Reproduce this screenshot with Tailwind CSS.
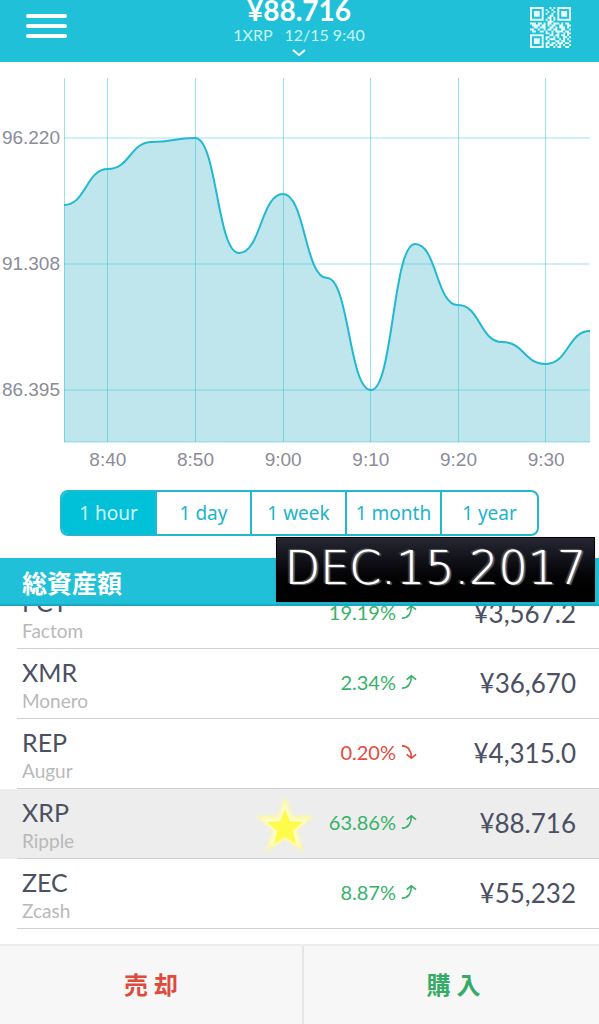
<!DOCTYPE html>
<html lang="ja">
<head>
    <meta charset="UTF-8">
    <meta name="viewport" content="width=device-width, initial-scale=1.0">
    <script src="https://cdn.jsdelivr.net/npm/@tailwindcss/browser@4"></script>
    <title>XRP chart</title>
</head>
<body class="flex min-h-screen flex-col bg-white font-[Lato,'Noto_Sans_CJK_JP',sans-serif] text-[#4b5163]">

    <!-- Header -->
    <header class="flex h-[62px] items-start justify-between overflow-hidden bg-[#20c1d8] pr-7 pl-[26px] text-white">
      <button class="mt-3 h-8 w-[42px]" aria-label="Menu">
        <svg viewBox="0 0 42 32" class="h-8 w-[42px]" fill="none" stroke="currentColor" stroke-width="4" stroke-linecap="round">
          <path d="M2 4H39M2 14H39M2 24H39" />
        </svg>
      </button>
      <div class="flex flex-col items-center">
        <h1 class="-mt-1 text-[28px] leading-7 font-bold">¥88.716</h1>
        <p class="text-base leading-[22px] whitespace-pre text-[#c9f4fa]">1XRP   12/15 9:40</p>
        <svg viewBox="0 0 14 8" class="mt-[3px] h-2 w-[14px]" fill="none" stroke="currentColor" stroke-width="2">
          <path d="M1 1l6 5 6-5" />
        </svg>
      </div>
      <button class="mt-[7px] h-[41px] w-[41px]" aria-label="QR">
        <svg viewBox="0 0 21 21" class="h-[41px] w-[41px]" fill="#e6fcff"><path id="qr" d="" /></svg>
      </button>
    </header>

    <!-- Chart -->
    <section class="flex pr-[9px] font-['Liberation_Sans',sans-serif] text-[19px] text-[#8b8c99]">
      <div class="w-16 shrink-0 pt-[13px] pr-1 text-right">
        <p class="h-[126px] leading-[126px]">96.220</p>
        <p class="h-[126px] leading-[126px]">91.308</p>
        <p class="h-[126px] leading-[126px]">86.395</p>
      </div>
      <div class="min-w-0 flex-1 pt-4">
        <svg viewBox="0 0 526 364" preserveAspectRatio="none" class="block h-[364px] w-full overflow-visible">
          <path fill="#bfe6ed" d="M0 127C22 127 22 91 44 91C66 91 66 64 88 64C110 64 109 60 131 60C153 60 153 175 175 175C197 175 197 116 219 116C241 116 241 200 263 200C285 200 285 312 307 312C329 312 329 166 351 166C373 166 372 227 394 227C416 227 416 264 438 264C460 264 460 286 482 286C504 286 504 253 526 253V364H0Z" />
          <g fill="none" stroke="#20c1d8">
            <path stroke-opacity=".45" d="M0.5 0V364M43.5 0V364M131.5 0V364M219.5 0V364M306.5 0V364M394.5 0V364M481.5 0V364M0 60H526M0 186H526M0 312H526M0 364H526" />
            <path stroke="#20b9d0" stroke-width="2" d="M0 127C22 127 22 91 44 91C66 91 66 64 88 64C110 64 109 60 131 60C153 60 153 175 175 175C197 175 197 116 219 116C241 116 241 200 263 200C285 200 285 312 307 312C329 312 329 166 351 166C373 166 372 227 394 227C416 227 416 264 438 264C460 264 460 286 482 286C504 286 504 253 526 253" />
          </g>
        </svg>
        <div class="grid grid-cols-6 text-center leading-9">
          <span>8:40</span>
          <span>8:50</span>
          <span>9:00</span>
          <span>9:10</span>
          <span>9:20</span>
          <span>9:30</span>
        </div>
      </div>
    </section>

    <!-- Range -->
    <div class="mx-[60px] mt-3 grid h-[46px] grid-cols-5 divide-x-2 divide-[#20b9d0] overflow-hidden rounded-lg border-2 border-[#20b9d0] font-['Noto_Sans',sans-serif] text-[19px] whitespace-nowrap text-[#20b4cb]">
      <button class="bg-[#00c1d8] text-[#d5f8fc]">1 hour</button>
      <button>1 day</button>
      <button>1 week</button>
      <button>1 month</button>
      <button>1 year</button>
    </div>

    <!-- Total assets -->
    <div class="relative z-10 mt-[22px] h-12 border-b-2 border-[#1aa9c3] bg-[#20c1d8] pl-[22px]">
      <h2 class="text-[25px] leading-[50px] font-bold text-white">総資産額</h2>
      <div class="absolute -top-[21px] right-1 flex h-[65px] w-[319px] items-center justify-center border border-black bg-linear-to-b from-[#272734] to-black pb-1 font-['DejaVu_Sans',sans-serif] text-[46px] leading-none font-extralight text-white shadow [text-shadow:0_0_1px_#fff,2px_1px_1px_#666,-2px_-1px_1px_#444]">DEC.15.2017</div>
    </div>

    <!-- Coins, scrolled a little way under the bar above -->
    <div class="overflow-hidden">
      <table class="-mt-[27px] w-full border-separate border-spacing-0">
        <tbody id="coins"></tbody>
      </table>
    </div>

    <!-- Actions -->
    <footer class="mt-auto flex h-20 border-t-2 border-[#ececec] bg-[#f7f7f7] text-2xl font-bold">
      <button class="w-[304px] shrink-0 border-r-2 border-[#e3e5e9] text-[#de4a3c]">売 却</button>
      <button class="flex-1 pl-1 text-[#36ab68]">購 入</button>
    </footer>

    <script>
        const coins = [
            { code: 'FCT', name: 'Factom', change: '19.19%', up: true, price: '¥3,567.2' },
            { code: 'XMR', name: 'Monero', change: '2.34%', up: true, price: '¥36,670' },
            { code: 'REP', name: 'Augur', change: '0.20%', up: false, price: '¥4,315.0' },
            { code: 'XRP', name: 'Ripple', change: '63.86%', up: true, price: '¥88.716', star: true },
            { code: 'ZEC', name: 'Zcash', change: '8.87%', up: true, price: '¥55,232' },
        ];
        const up = '<path d="M1 14.5C8 14.5 11 9 11 2M6 5.5l5-4 5 4" />';
        const down = '<path d="M1 1.5C8 1.5 11 7 11 14M6 10.5l5 4 5-4" />';
        const star = `<svg viewBox="0 0 64 64" class="absolute top-1 right-[100px] h-16 w-16">
              <defs><filter id="glow" x="-20%" y="-20%" width="140%" height="140%"><feGaussianBlur stdDeviation="1.5" /></filter></defs>
              <path filter="url(#glow)" fill="#fffb9a" d="M32 3l7 20 22 0-17 14 7 22-19-13-19 13 7-22L3 23l22 0z" />
              <path filter="url(#glow)" fill="#fffde0" d="M32 10l6 16 17 0-13 11 5 16-15-10-15 10 5-16L9 26l17 0z" />
              <path fill="#fffb4a" d="M32 16l5 12 13 1-10 9 3 13-11-7-11 7 3-13-10-9 13-1z" />
            </svg>`;
        let rows = '';
        for (const c of coins) {
            rows += `<tr class="h-[70px] ${c.star ? 'bg-[#ededed]' : ''}">
            <td class="w-[17px]"></td>
            <td class="border-b border-[#cdd0d5] pt-[7px] pl-[5px] align-top">
              <p class="text-[25px] leading-8">${c.code}</p>
              <p class="text-[19px] leading-[26px] text-[#b9b9b9]">${c.name}</p>
            </td>
            <td class="relative border-b border-[#cdd0d5] pb-1 text-right text-xl ${c.up ? 'text-[#36b368]' : 'text-[#e24b3d]'}">${c.star ? star : ''}
              <span class="inline-flex items-center gap-[5px]">${c.change}<svg viewBox="0 0 17 16" class="h-4 w-4" fill="none" stroke="currentColor" stroke-width="1.7">${c.up ? up : down}</svg></span>
            </td>
            <td class="w-[182px] border-b border-[#cdd0d5] pr-[23px] text-right text-[26px]">${c.price}</td>
          </tr>`;
        }
        document.getElementById('coins').innerHTML = rows;

        // one character per module
        const qr = [
            '#######...#.#.#######',
            '#.....#.#..#..#.....#',
            '#.###.#..#..#.#.###.#',
            '#.###.#.#..#..#.###.#',
            '#.###.#...##..#.###.#',
            '#.....#..##.#.#.....#',
            '#######.#.#.#.#######',
            '.........###.........',
            '###.##.#.##.###.#.##.',
            '.####.##.#.##..##..##',
            '..##.###..##.#.###.#.',
            '##..#..#.##.##..##..#',
            '.##..##.#..#.####.##.',
            '........##.#..#..#.##',
            '#######...##.##.##.#.',
            '#.....#.##..#.#..##.#',
            '#.###.#.#.###..#.#.#.',
            '#.###.#..#...##.##..#',
            '#.###.#.##.##.###.##.',
            '#.....#.#.##.#.#.#..#',
            '#######.##..#.##..##.',
        ];
        let d = '';
        qr.forEach((line, y) => {
            [...line].forEach((m, x) => {
                if (m == '#') d += `M${x} ${y}h1v1h-1z`;
            });
        });
        document.getElementById('qr').setAttribute('d', d);
    </script>
</body>
</html>
